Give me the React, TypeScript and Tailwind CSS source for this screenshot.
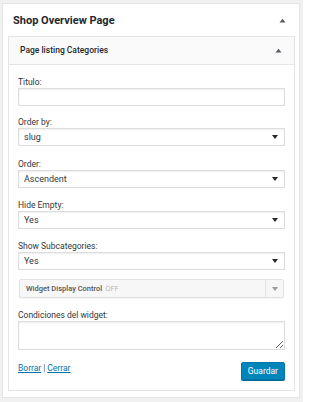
import React from "react";

const font = { fontFamily: 'Roboto, "Liberation Sans", sans-serif' };

function UpArrow() {
  return (
    <svg width="7" height="5" viewBox="0 0 7 5" className="block">
      <path d="M0.5 4.5 L3.5 0.8 L6.5 4.5 Z" fill="#555d66" />
    </svg>
  );
}

function DownArrow({ color = "#23282d" }: { color?: string }) {
  return (
    <svg width="6" height="4" viewBox="0 0 6 4" className="block">
      <path d="M0 0 L6 0 L3 4 Z" fill={color} />
    </svg>
  );
}

function Label({ children }: { children: React.ReactNode }) {
  return <div className="h-[11px] leading-[11px] text-[8.5px] text-[#32373c]">{children}</div>;
}

function Select({ value }: { value: string }) {
  return (
    <div className="h-[18px] border border-[#ddd] bg-white shadow-[inset_0_1px_2px_rgba(0,0,0,0.07)] flex items-center justify-between pl-[5px] pr-[6px]">
      <span className="text-[9px] text-[#32373c] leading-none">{value}</span>
      <DownArrow />
    </div>
  );
}

export default function App() {
  return (
    <div className="w-[303px] h-[402px] bg-[#f1f1f1] pt-[3px] pl-[2px] pr-[3px]" style={font}>
      <div className="h-[395px] bg-white border border-[#e5e5e5] flex flex-col">
        <div className="h-[32px] flex items-center justify-between pl-[10px] pr-[13px]">
          <span className="text-[11px] font-bold text-[#23282d] pt-[2px]">Shop Overview Page</span>
          <UpArrow />
        </div>
        <div className="ml-[5px] mr-[4px] h-[355px] border border-[#e5e5e5] flex flex-col">
          <div className="h-[28px] bg-[#fafafa] border-b border-[#e5e5e5] flex items-center justify-between pl-[11px] pr-[12px]">
            <span className="text-[8.5px] font-medium text-[#23282d]">Page listing Categories</span>
            <UpArrow />
          </div>
          <div className="pl-[9px] pr-[9px] pt-[12px] flex flex-col">
            <Label>Titulo:</Label>
            <div className="h-[18px] border border-[#ddd] bg-white shadow-[inset_0_1px_2px_rgba(0,0,0,0.07)]" />
            <div className="h-[11px]" />
            <Label>Order by:</Label>
            <Select value="slug" />
            <div className="h-[13px]" />
            <Label>Order:</Label>
            <Select value="Ascendent" />
            <div className="h-[12px]" />
            <Label>Hide Empty:</Label>
            <Select value="Yes" />
            <div className="h-[12px]" />
            <Label>Show Subcategories:</Label>
            <Select value="Yes" />
            <div className="h-[9px]" />
            <div className="mx-[1px] h-[19px] bg-[#f7f7f7] border border-[#e2e2e2] rounded-[2px] shadow-[0_1px_1px_rgba(0,0,0,0.04)] flex items-stretch">
              <div className="flex-1 flex items-center pl-[6px] text-[7.5px] leading-none">
                <span className="font-medium text-[#555]">Widget Display Control</span>
                <span className="ml-[3px] text-[#bbb]">OFF</span>
              </div>
              <div className="w-[18px] border-l border-[#e5e5e5] flex items-center justify-center">
                <DownArrow color="#9a9a9a" />
              </div>
            </div>
            <div className="h-[12px]" />
            <Label>Condiciones del widget:</Label>
            <textarea className="h-[29px] border border-[#ddd] bg-white shadow-[inset_0_1px_2px_rgba(0,0,0,0.07)] block w-full outline-none" />
            <div className="mt-[12px] flex items-start justify-between">
              <div className="pt-[1px] text-[8.5px] leading-[11px] text-[#555]">
                <a className="text-[#0073aa] underline">Borrar</a>
                <span className="mx-[2px]">|</span>
                <a className="text-[#0073aa] underline">Cerrar</a>
              </div>
              <button className="h-[18px] px-[6px] bg-[#0085ba] border border-[#0073aa] rounded-[2px] shadow-[0_1px_0_#006799] text-white text-[8.5px] leading-none">
                Guardar
              </button>
            </div>
          </div>
        </div>
      </div>
    </div>
  );
}
